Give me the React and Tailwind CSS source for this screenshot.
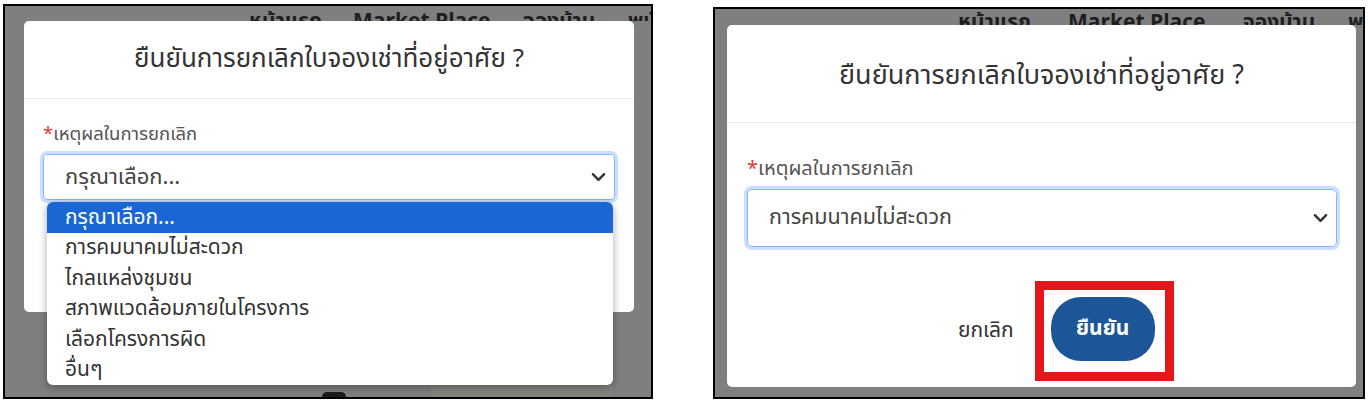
import { useState } from "react";

const FONT = {
  fontFamily: '"Noto Sans Thai", "Noto Sans", "Liberation Sans", sans-serif',
};

const reasons = [
  "กรุณาเลือก...",
  "การคมนาคมไม่สะดวก",
  "ไกลแหล่งชุมชน",
  "สภาพแวดล้อมภายในโครงการ",
  "เลือกโครงการผิด",
  "อื่นๆ",
];

function Chevron({ className }) {
  return (
    <svg viewBox="0 0 16 10" className={className} fill="none">
      <path
        d="M2 2l6 6 6-6"
        stroke="#333"
        strokeWidth="2.6"
        strokeLinecap="round"
        strokeLinejoin="round"
      />
    </svg>
  );
}

function NavBar({ pad, widths, size }) {
  const items = ["หน้าแรก", "Market Place", "จองบ้าน", "พนักงาน"];
  return (
    <div
      className={`flex overflow-hidden whitespace-nowrap font-bold leading-none text-[#1e1e1e] ${size}`}
      style={{ paddingLeft: pad }}
    >
      {items.map((t, i) => (
        <span key={t} className="shrink-0" style={{ width: widths[i] }}>
          {t}
        </span>
      ))}
    </div>
  );
}

function Label({ className = "" }) {
  return (
    <div className={`text-[#555] leading-[24px] ${className}`}>
      <span className="text-[#e53935]">*</span>เหตุผลในการยกเลิก
    </div>
  );
}

function OpenPanel() {
  const [selected] = useState(0);
  return (
    <div className="relative mt-[4px] ml-[3px] w-[650px] h-[395px] border-2 border-black bg-[#7f7f7f] overflow-hidden flex flex-col">
      <div className="h-[15px] pt-[5px] overflow-hidden">
        <NavBar pad={244} widths={[104, 170, 105, 80]} size="text-[21px]" />
      </div>

      <div className="ml-[19px] w-[610px] h-[291px] shrink-0 bg-white rounded-[5px] flex flex-col">
        <div className="h-[78px] flex items-center justify-center border-b border-[#e3e6ea] text-[26px] text-[#333]">
          ยืนยันการยกเลิกใบจองเช่าที่อยู่อาศัย ?
        </div>
        <div className="px-[19px] pt-[23px]">
          <Label className="text-[18.5px]" />
          <div className="relative mt-[8px]">
            <div className="h-[46px] rounded-[4px] border border-[#86b7fe] shadow-[0_0_0_3px_rgba(13,110,253,0.22)] flex items-center justify-between pl-[21px] pr-[8px] text-[22px] text-[#444]">
              <span>กรุณาเลือก...</span>
              <Chevron className="w-[15px] h-[10px]" />
            </div>

            <ul className="absolute left-[4px] top-full mt-[2px] w-[566px] bg-white rounded-[6px] overflow-hidden shadow-[0_2px_8px_rgba(0,0,0,0.35)] z-10">
              {reasons.map((r, i) => (
                <li
                  key={r}
                  className={`h-[30.5px] flex items-center pl-[18px] text-[21px] ${
                    i === selected ? "bg-[#1a66d2] text-white" : "text-[#333]"
                  }`}
                >
                  {r}
                </li>
              ))}
            </ul>
          </div>
        </div>
      </div>

      <div className="flex-1 flex items-end">
        <div className="ml-[317px] w-[24px] h-[8px] rounded-t-[5px] bg-[#1c1c1c] translate-y-[3px]" />
        <div className="ml-[85px] w-[182px] h-[12px] bg-[#85837c]" />
      </div>
    </div>
  );
}

function ConfirmPanel() {
  return (
    <div className="mt-[7px] ml-[60px] w-[652px] h-[392px] border-2 border-black bg-[#7f7f7f] overflow-hidden flex flex-col">
      <div className="h-[16px] pt-[3px] overflow-hidden">
        <NavBar pad={243} widths={[110, 175, 105, 80]} size="text-[21px]" />
      </div>

      <div className="ml-[12px] w-[629px] h-[362px] shrink-0 bg-white rounded-[5px] flex flex-col">
        <div className="h-[98px] pt-[6px] flex items-center justify-center border-b border-[#e3e6ea] text-[27px] text-[#333]">
          ยืนยันการยกเลิกใบจองเช่าที่อยู่อาศัย ?
        </div>
        <div className="pl-[20px] pr-[19px] pt-[34px]">
          <Label className="text-[20px]" />
          <div className="mt-[8px] h-[58px] rounded-[5px] border border-[#86b7fe] shadow-[0_0_0_3px_rgba(13,110,253,0.22)] flex items-center justify-between pl-[21px] pr-[8px] text-[21.5px] text-[#444]">
            <span>การคมนาคมไม่สะดวก</span>
            <Chevron className="w-[15px] h-[10px]" />
          </div>
        </div>
        <div className="mt-[34px] flex items-center pl-[231px]">
          <button className="text-[21px] text-[#333]">ยกเลิก</button>
          <div className="ml-[21px] border-[9px] border-[#e2161b] pl-[7px] pr-[10px] pt-[7px] pb-[11px]">
            <button className="w-[104px] h-[64px] rounded-[30px] bg-[#1c5598] text-white text-[21px] font-bold">
              ยืนยัน
            </button>
          </div>
        </div>
      </div>
    </div>
  );
}

export default function App() {
  return (
    <div className="w-[1368px] h-[404px] bg-white flex items-start" style={FONT}>
      <OpenPanel />
      <ConfirmPanel />
    </div>
  );
}
